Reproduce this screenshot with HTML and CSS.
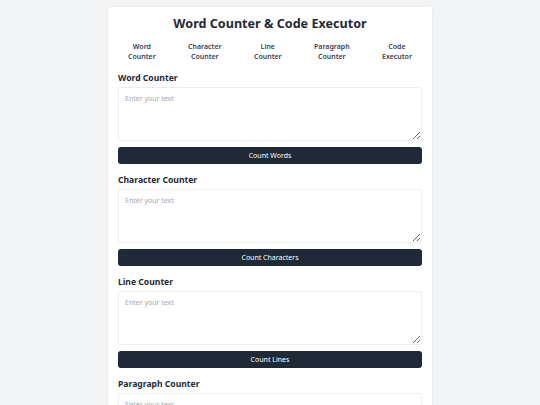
FILE: index.html
```html
<!DOCTYPE html>
<html lang="en">
<head>
<meta charset="utf-8">
<title>Word Counter &amp; Code Executor</title>
<link rel="stylesheet" href="styles.css">
</head>
<body>
<main class="card">
  <h1 class="title">Word Counter &amp; Code Executor</h1>
  <nav class="tabs">
    <a class="tab">Word<br>Counter</a>
    <a class="tab">Character<br>Counter</a>
    <a class="tab">Line<br>Counter</a>
    <a class="tab">Paragraph<br>Counter</a>
    <a class="tab">Code<br>Executor</a>
  </nav>
  <section class="tool">
    <h2 class="tool-title">Word Counter</h2>
    <textarea class="input" placeholder="Enter your text"></textarea>
    <button class="btn">Count Words</button>
  </section>
  <section class="tool">
    <h2 class="tool-title">Character Counter</h2>
    <textarea class="input" placeholder="Enter your text"></textarea>
    <button class="btn">Count Characters</button>
  </section>
  <section class="tool">
    <h2 class="tool-title">Line Counter</h2>
    <textarea class="input" placeholder="Enter your text"></textarea>
    <button class="btn">Count Lines</button>
  </section>
  <section class="tool">
    <h2 class="tool-title">Paragraph Counter</h2>
    <textarea class="input" placeholder="Enter your text"></textarea>
    <button class="btn">Count Paragraphs</button>
  </section>
</main>
</body>
</html>
```
FILE: styles.css
```css
* { box-sizing: border-box; }
html, body { margin: 0; padding: 0; }
body {
  background: #f3f4f6;
  font-family: "Noto Sans", "Open Sans", sans-serif;
  color: #1f2937;
  height: 405px;
  overflow: hidden;
}
.card {
  width: 324px;
  margin: 7px auto 0;
  background: #ffffff;
  border-radius: 4px;
  box-shadow: 0 1px 3px rgba(0,0,0,0.06), 0 1px 2px rgba(0,0,0,0.03);
  padding: 10px 10px 20px;
}
.title {
  margin: 0;
  font-size: 12.6px;
  line-height: 14px;
  font-weight: 700;
  text-align: center;
  color: #1f2937;
}
.tabs {
  display: flex;
  justify-content: space-between;
  margin-top: 11px;
}
.tab {
  padding: 0 10px;
  font-size: 7px;
  line-height: 10px;
  font-weight: 600;
  text-align: center;
  color: #374151;
}
.tool { margin-top: 9px; display: flex; flex-direction: column; }
.tool-title {
  margin: 0 0 2px;
  font-size: 8.6px;
  line-height: 14px;
  font-weight: 700;
  color: #1f2937;
}
.input {
  display: block;
  width: 100%;
  height: 54px;
  border: 1px solid #eceef1;
  border-radius: 3px;
  padding: 6px;
  font-family: inherit;
  font-size: 7px;
  color: #1f2937;
  resize: vertical;
}
.input::placeholder { color: #a3a8b0; }
.btn {
  display: block;
  width: 100%;
  height: 17px;
  margin-top: 6px;
  border: none;
  border-radius: 3px;
  background: #1f2937;
  color: #ffffff;
  font-family: inherit;
  font-size: 7px;
  padding: 0;
}
```
